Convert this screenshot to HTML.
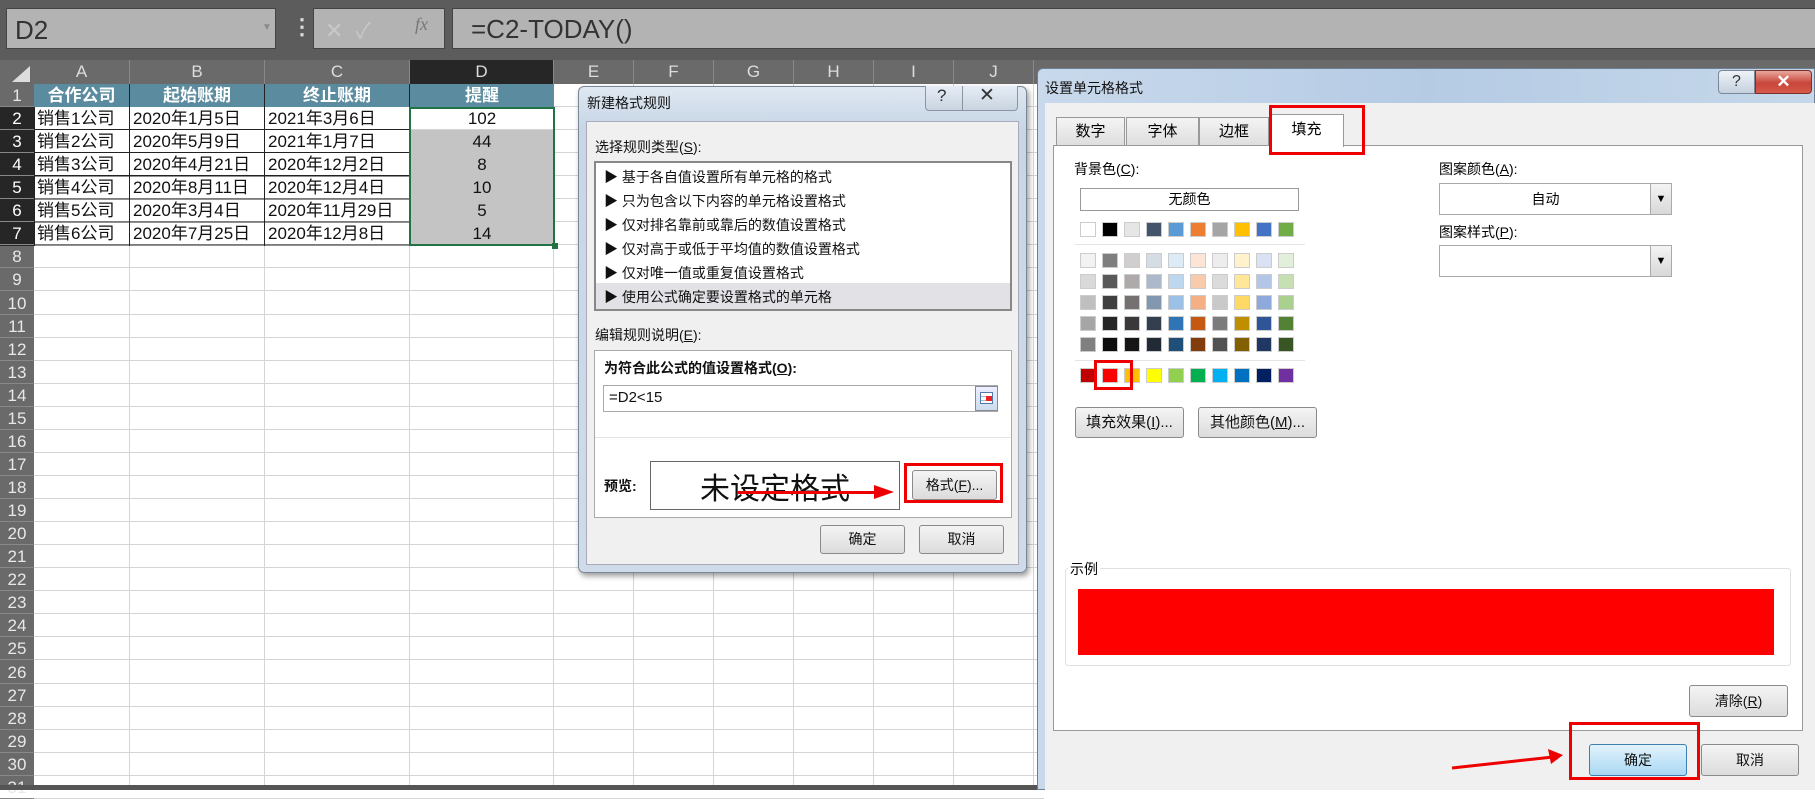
<!DOCTYPE html>
<html><head><meta charset="utf-8">
<style>
*{margin:0;padding:0;box-sizing:border-box}
body{width:1815px;height:790px;overflow:hidden;position:relative;background:#fff;font-family:"Liberation Sans","Noto Sans CJK SC",sans-serif}
.a{position:absolute}
.cjk{font-family:"Liberation Sans","Noto Sans CJK SC",sans-serif}
.btn{position:absolute;border:1px solid #8a8a8a;border-radius:3px;background:linear-gradient(#f4f4f4,#dcdcdc);font-size:14px;text-align:center;color:#111}
</style></head><body>
<!-- top bar -->
<div class="a" style="left:0;top:0;width:1815px;height:60px;background:#5c5c5c"></div>
<div class="a" style="left:6px;top:8px;width:270px;height:41px;background:#b3b3b3;border:1px solid #444;font-size:26px;color:#333;padding:6px 8px">D2</div>
<div class="a" style="left:262px;top:22px;color:#8a8a8a;font-size:10px">▼</div>
<div class="a" style="left:291px;top:14px;color:#ddd;font-size:22px;font-weight:bold">⋮</div>
<div class="a" style="left:313px;top:8px;width:132px;height:41px;background:#b3b3b3;border:1px solid #444"></div>
<div class="a" style="left:325px;top:13px;color:#c8c8c8;font-size:22px">✕ &nbsp;✓</div>
<div class="a" style="left:415px;top:14px;color:#777;font-size:18px;font-style:italic;font-family:'Liberation Serif',serif">fx</div>
<div class="a" style="left:452px;top:8px;width:1370px;height:41px;background:#b3b3b3;border:1px solid #444;font-size:26px;color:#333;padding:5px 18px">=C2-TODAY()</div>
<!-- col headers -->
<div class="a" style="left:0;top:60px;width:1815px;height:24px;background:#6a6a6a"></div>
<div class="a" style="left:12px;top:66px;width:0;height:0;border-left:18px solid transparent;border-bottom:16px solid #ddd"></div>
<div id="ch"></div>
<div class="a" style="left:0;top:84px;width:34px;height:706px;background:#6a6a6a"></div>
<div class="a" style="left:0;top:107px;width:34px;height:139px;background:#262626"></div>
<div id="grid"></div>
<div id="rh"></div>
<div class="a" style="left:34px;top:84px;width:520px;height:23px;background:#5b8b9e"></div>
<div class="a" style="left:0;top:785px;width:1040px;height:5px;background:#555"></div>

<div class="cjk" style="font-size:17px;color:#111">
<div class="a" style="left:34px;top:84px;width:96px;height:23px;color:#fff;font-weight:bold;text-align:center;line-height:23px;border-right:1px solid #222">合作公司</div>
<div class="a" style="left:130px;top:84px;width:135px;height:23px;color:#fff;font-weight:bold;text-align:center;line-height:23px;border-right:1px solid #222">起始账期</div>
<div class="a" style="left:265px;top:84px;width:145px;height:23px;color:#fff;font-weight:bold;text-align:center;line-height:23px;border-right:1px solid #222">终止账期</div>
<div class="a" style="left:410px;top:84px;width:144px;height:23px;color:#fff;font-weight:bold;text-align:center;line-height:23px">提醒</div>
<div class="a" style="left:410px;top:130px;width:144px;height:116px;background:#c4c4c4"></div>
<div class="a" style="left:34px;top:107px;width:376px;height:139px;border-left:1px solid #222;border-right:1px solid #222;background:repeating-linear-gradient(transparent 0 22px,#222 22px 23.1px)"></div>
<div class="a" style="left:129px;top:107px;width:1px;height:139px;background:#222"></div>
<div class="a" style="left:264px;top:107px;width:1px;height:139px;background:#222"></div>
<div class="a" style="left:37px;top:107px;line-height:23.06px">销售1公司<br>销售2公司<br>销售3公司<br>销售4公司<br>销售5公司<br>销售6公司</div>
<div class="a" style="left:133px;top:107px;line-height:23.06px">2020年1月5日<br>2020年5月9日<br>2020年4月21日<br>2020年8月11日<br>2020年3月4日<br>2020年7月25日</div>
<div class="a" style="left:268px;top:107px;line-height:23.06px">2021年3月6日<br>2021年1月7日<br>2020年12月2日<br>2020年12月4日<br>2020年11月29日<br>2020年12月8日</div>
<div class="a" style="left:410px;top:107px;width:144px;text-align:center;line-height:23.06px">102<br>44<br>8<br>10<br>5<br>14</div>
</div>
<div class="a" style="left:409px;top:107px;width:146px;height:139px;border:2px solid #217346"></div>
<div class="a" style="left:552px;top:243px;width:6px;height:6px;background:#217346"></div>

<!-- dialog 1 -->
<div class="a" style="left:578px;top:86px;width:449px;height:487px;border:1px solid #7a8796;border-radius:6px;background:linear-gradient(#dfe8f2,#c8d6e6 40px,#cfdbe8);box-shadow:2px 3px 6px rgba(0,0,0,.4)"></div>
<div class="a cjk" style="left:587px;top:93px;font-size:14px;color:#111">新建格式规则</div>
<div class="a" style="left:925px;top:86px;width:93px;height:25px;border:1px solid #8a95a3;border-top:none;border-radius:0 0 4px 4px;background:linear-gradient(#e6edf5,#c9d4e0)"></div>
<div class="a" style="left:962px;top:86px;width:1px;height:25px;background:#8a95a3"></div>
<div class="a" style="left:937px;top:86px;font-size:17px;color:#333">?</div>
<div class="a" style="left:979px;top:84px;font-size:19px;color:#333">✕</div>
<div class="a" style="left:586px;top:121px;width:433px;height:444px;background:#f0f0f0;border:1px solid #aab"></div>
<div class="a cjk" style="left:595px;top:137px;font-size:14px;color:#111">选择规则类型(<u>S</u>):</div>
<div class="a" style="left:594px;top:161px;width:418px;height:150px;background:#fff;border:2px solid #888"></div>
<div class="a" style="left:596px;top:283px;width:414px;height:26px;background:#e1e1e6"></div>
<div class="a cjk" style="left:604px;top:165px;font-size:14px;line-height:24px;color:#111">▶ 基于各自值设置所有单元格的格式<br>▶ 只为包含以下内容的单元格设置格式<br>▶ 仅对排名靠前或靠后的数值设置格式<br>▶ 仅对高于或低于平均值的数值设置格式<br>▶ 仅对唯一值或重复值设置格式<br>▶ 使用公式确定要设置格式的单元格</div>
<div class="a cjk" style="left:595px;top:325px;font-size:14px;color:#111">编辑规则说明(<u>E</u>):</div>
<div class="a" style="left:594px;top:350px;width:418px;height:168px;background:#fff;border:1px solid #aaa"></div>
<div class="a" style="left:595px;top:437px;width:416px;height:1px;background:#e4e4e4"></div>
<div class="a cjk" style="left:604px;top:358px;font-size:14px;font-weight:bold;color:#111">为符合此公式的值设置格式(<u>O</u>):</div>
<div class="a" style="left:603px;top:385px;width:395px;height:27px;border:1px solid #aaa;font-size:15px;padding:3px 5px;color:#111">=D2&lt;15</div>
<div class="a" style="left:975px;top:386px;width:23px;height:25px;border:1px solid #889;background:linear-gradient(#eef,#cde);"></div>
<div class="a" style="left:980px;top:392px;width:13px;height:12px;border:1px solid #57a;background:repeating-linear-gradient(#fff 0 3px,#9bd 3px 4px)"></div>
<div class="a" style="left:986px;top:396px;width:6px;height:5px;background:#e22"></div>
<div class="a cjk" style="left:604px;top:476px;font-size:14px;font-weight:bold;color:#111">预览:</div>
<div class="a" style="left:650px;top:461px;width:250px;height:49px;border:1px solid #666;background:#fff"></div>
<div class="a cjk" style="left:700px;top:464px;font-size:30px;color:#111">未设定格式</div>
<div class="a" style="left:737px;top:491px;width:140px;height:3px;background:#e00"></div>
<div class="a" style="left:874px;top:485px;width:0;height:0;border-left:20px solid #e00;border-top:7px solid transparent;border-bottom:7px solid transparent"></div>
<div class="btn cjk" style="left:912px;top:470px;width:85px;height:30px;line-height:28px">格式(<u>F</u>)...</div>
<div class="a" style="left:904px;top:463px;width:99px;height:40px;border:3px solid #e00"></div>
<div class="btn cjk" style="left:820px;top:525px;width:85px;height:29px;line-height:27px">确定</div>
<div class="btn cjk" style="left:919px;top:525px;width:85px;height:29px;line-height:27px">取消</div>

<!-- dialog 2 -->
<div class="a" style="left:1037px;top:68px;width:778px;height:722px;border:1px solid #6f7f93;border-radius:6px 0 0 0;background:linear-gradient(90deg,#c9d9ec,#b5cbe4 50%,#c5d7ea)"></div>
<div class="a cjk" style="left:1045px;top:78px;font-size:14px;color:#111">设置单元格格式</div>
<div class="a" style="left:1718px;top:70px;width:37px;height:24px;border:1px solid #7b8797;border-radius:4px 0 0 4px;background:linear-gradient(#eef3f8,#c5d1df);font-size:16px;text-align:center;line-height:22px;color:#333">?</div>
<div class="a" style="left:1755px;top:70px;width:57px;height:24px;border:1px solid #7b3030;border-radius:0 4px 4px 0;background:linear-gradient(#e9a89c,#c8453a 55%,#d55a48);color:#fff;font-size:17px;text-align:center;line-height:22px;font-weight:bold">✕</div>
<div class="a" style="left:1045px;top:103px;width:770px;height:687px;background:#f0f0f0"></div>
<div class="a" style="left:1053px;top:145px;width:750px;height:586px;background:#fff;border:1px solid #999"></div>
<div class="a cjk" style="left:1056px;top:117px;width:69px;height:29px;border:1px solid #999;background:linear-gradient(#f4f4f4,#dedede);font-size:15px;text-align:center;line-height:27px">数字</div>
<div class="a cjk" style="left:1126px;top:117px;width:73px;height:29px;border:1px solid #999;background:linear-gradient(#f4f4f4,#dedede);font-size:15px;text-align:center;line-height:27px">字体</div>
<div class="a cjk" style="left:1199px;top:117px;width:70px;height:29px;border:1px solid #999;background:linear-gradient(#f4f4f4,#dedede);font-size:15px;text-align:center;line-height:27px">边框</div>
<div class="a cjk" style="left:1269px;top:114px;width:75px;height:33px;border:1px solid #999;border-bottom:none;background:#fff;font-size:15px;text-align:center;line-height:30px">填充</div>
<div class="a" style="left:1269px;top:105px;width:96px;height:50px;border:3px solid #e00"></div>
<div class="a cjk" style="left:1074px;top:159px;font-size:14px">背景色(<u>C</u>):</div>
<div class="a cjk" style="left:1080px;top:188px;width:219px;height:23px;border:1px solid #999;font-size:14px;text-align:center;line-height:21px">无颜色</div>
<div class="a" style="left:1075px;top:244px;width:230px;height:1px;background:#e4e4e4"></div>
<div class="a" style="left:1075px;top:360px;width:230px;height:1px;background:#e4e4e4"></div>
<div id="sw"></div>
<div class="a" style="left:1094px;top:360px;width:39px;height:30px;border:3px solid #e00"></div>
<div class="btn cjk" style="left:1075px;top:407px;width:109px;height:31px;line-height:29px;font-size:15px">填充效果(<u>I</u>)...</div>
<div class="btn cjk" style="left:1198px;top:407px;width:119px;height:31px;line-height:29px;font-size:15px">其他颜色(<u>M</u>)...</div>
<div class="a cjk" style="left:1439px;top:159px;font-size:14px">图案颜色(<u>A</u>):</div>
<div class="a cjk" style="left:1439px;top:183px;width:233px;height:32px;border:1px solid #aaa;font-size:14px;text-align:center;line-height:30px;padding-right:20px">自动</div>
<div class="a" style="left:1650px;top:184px;width:21px;height:30px;border-left:1px solid #aaa;background:linear-gradient(#f4f4f4,#d8d8d8);font-size:11px;text-align:center;line-height:30px">▼</div>
<div class="a cjk" style="left:1439px;top:222px;font-size:14px">图案样式(<u>P</u>):</div>
<div class="a" style="left:1439px;top:245px;width:233px;height:32px;border:1px solid #aaa"></div>
<div class="a" style="left:1650px;top:246px;width:21px;height:30px;border-left:1px solid #aaa;background:linear-gradient(#f4f4f4,#d8d8d8);font-size:11px;text-align:center;line-height:30px">▼</div>
<div class="a" style="left:1065px;top:568px;width:726px;height:98px;border:1px solid #e0e0e0;border-radius:3px"></div>
<div class="a cjk" style="left:1068px;top:559px;font-size:14px;background:#fff;padding:0 2px">示例</div>
<div class="a" style="left:1078px;top:589px;width:696px;height:66px;background:#f00"></div>
<div class="btn cjk" style="left:1689px;top:685px;width:99px;height:32px;line-height:30px">清除(<u>R</u>)</div>
<div class="btn cjk" style="left:1589px;top:744px;width:98px;height:32px;line-height:30px;background:linear-gradient(#e2f3fc,#a9d8f3);border-color:#3c7fb1">确定</div>
<div class="btn cjk" style="left:1701px;top:744px;width:98px;height:32px;line-height:30px">取消</div>
<div class="a" style="left:1569px;top:722px;width:131px;height:58px;border:3px solid #e00"></div>
<svg class="a" style="left:1448px;top:745px" width="125" height="30"><line x1="4" y1="23" x2="105" y2="12" stroke="#e00" stroke-width="3"/><polygon points="115,10 100,4 103,19" fill="#e00"/></svg>

<script>
var cols=[34,130,265,410,554,634,714,794,874,954,1034],L="ABCDEFGHIJ",h="",g="";
for(var i=0;i<10;i++){var x=cols[i],w=cols[i+1]-x;
h+='<div class="a" style="left:'+x+'px;top:60px;width:'+w+'px;height:24px;'+(i==3?'background:#262626;':'')+'border-right:1px solid #888;color:#ddd;font-size:17px;text-align:center;line-height:24px">'+L[i]+'</div>';
g+='<div class="a" style="left:'+(cols[i+1]-1)+'px;top:84px;width:1px;height:701px;background:#d4d4d4"></div>';}
document.getElementById('ch').innerHTML=h;
var r="";
for(var n=1;n<=31;n++){var t=84+(n-1)*23.06;
g+='<div class="a" style="left:34px;top:'+(t+22)+'px;width:1010px;height:1px;background:#d4d4d4"></div>';
r+='<div class="a" style="left:0;top:'+t+'px;width:34px;height:23px;border-bottom:1px solid #888;color:'+(n>=2&&n<=7?'#fff':'#e8e8e8')+';font-size:17px;text-align:center;line-height:23px">'+n+'</div>';}
document.getElementById('grid').innerHTML=g;document.getElementById('rh').innerHTML=r;
var sc=[["#ffffff","#000000","#e7e6e6","#44546a","#5b9bd5","#ed7d31","#a5a5a5","#ffc000","#4472c4","#70ad47"],
["#f2f2f2","#7f7f7f","#d0cece","#d6dce4","#ddebf7","#fce4d6","#ededed","#fff2cc","#d9e1f2","#e2efda"],
["#d9d9d9","#595959","#aeaaaa","#acb9ca","#bdd7ee","#f8cbad","#dbdbdb","#ffe699","#b4c6e7","#c6e0b4"],
["#bfbfbf","#404040","#757171","#8497b0","#9bc2e6","#f4b084","#c9c9c9","#ffd966","#8ea9db","#a9d08e"],
["#a6a6a6","#262626","#3a3838","#333f4f","#2f75b5","#c65911","#7b7b7b","#bf8f00","#2f5597","#548235"],
["#808080","#0d0d0d","#161616","#222b35","#1f4e78","#833c0c","#525252","#806000","#203764","#375623"],
["#c00000","#ff0000","#ffc000","#ffff00","#92d050","#00b050","#00b0f0","#0070c0","#002060","#7030a0"]];
var ys=[222,253,274,295,316,337,368],s="";
for(var a=0;a<7;a++)for(var b=0;b<10;b++)s+='<div class="a" style="left:'+(1080+b*22)+'px;top:'+ys[a]+'px;width:16px;height:15px;background:'+sc[a][b]+';border:1px solid #ccc"></div>';
document.getElementById('sw').innerHTML=s;
</script>
</body></html>
